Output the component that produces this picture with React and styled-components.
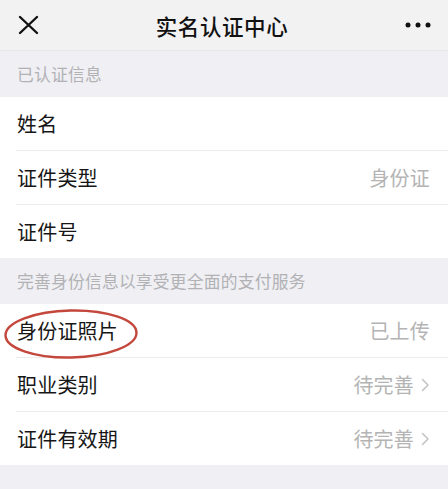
import React from "react";
import styled, { createGlobalStyle } from "styled-components";

const GlobalStyle = createGlobalStyle`
  html, body {
    margin: 0;
    padding: 0;
    background: #efeff4;
  }
  body {
    font-family: "Noto Sans CJK SC", "Noto Sans", sans-serif;
    -webkit-font-smoothing: antialiased;
  }
`;

const Page = styled.div`
  width: 448px;
  min-height: 489px;
  background: #efeff4;
`;

const NavBar = styled.header`
  height: 51px;
  box-sizing: border-box;
  background: #f2f2f3;
  border-bottom: 1px solid #e8e8ec;
  display: grid;
  grid-template-columns: 60px 1fr 60px;
  align-items: center;
`;

const NavButton = styled.div`
  display: flex;
  align-items: center;
  justify-content: ${(p) => (p.$end ? "flex-end" : "flex-start")};
  padding: ${(p) => (p.$end ? "0 17px 0 0" : "0 0 0 18px")};
  height: 100%;
`;

const Title = styled.h1`
  margin: 0;
  text-align: center;
  font-size: 21.5px;
  font-weight: 500;
  color: #111;
  letter-spacing: 0.6px;
  padding-right: 4px;
`;

const SectionTitle = styled.div`
  height: 46px;
  display: flex;
  align-items: center;
  padding-left: 17px;
  font-size: 16.8px;
  color: #b2b2b4;
  letter-spacing: 0.2px;
`;

const Group = styled.section`
  background: #fff;
`;

const Row = styled.div`
  position: relative;
  height: 53px;
  margin-left: 16px;
  padding: 0 18px 0 1px;
  display: flex;
  align-items: center;
  justify-content: space-between;
  border-bottom: 1px solid #ececec;
  &:last-child {
    border-bottom: none;
  }
`;

const Label = styled.span`
  font-size: 20px;
  color: #161616;
  letter-spacing: 0.2px;
`;

const Value = styled.span`
  display: flex;
  align-items: center;
  gap: 7px;
  font-size: 20px;
  color: #b4b4b4;
  letter-spacing: 0.2px;
`;

const Highlight = styled.svg`
  position: absolute;
  left: -13px;
  top: 4px;
  pointer-events: none;
`;

const CloseIcon = () => (
  <svg width="22" height="20" viewBox="0 0 22 20">
    <path d="M2 2 L19 18 M19 2 L2 18" stroke="#111" strokeWidth="2.4" strokeLinecap="round" fill="none" />
  </svg>
);

const MoreIcon = () => (
  <svg width="26" height="8" viewBox="0 0 26 8">
    <circle cx="3" cy="4" r="2.5" fill="#111" />
    <circle cx="13" cy="4" r="2.5" fill="#111" />
    <circle cx="23" cy="4" r="2.5" fill="#111" />
  </svg>
);

const Chevron = () => (
  <svg width="9" height="14" viewBox="0 0 9 14">
    <path d="M1.5 1.5 L7 7 L1.5 12.5" stroke="#c4c4c4" strokeWidth="1.6" fill="none" strokeLinecap="round" strokeLinejoin="round" />
  </svg>
);

const verified = [
  { label: "姓名" },
  { label: "证件类型", value: "身份证" },
  { label: "证件号" },
];

const extra = [
  { label: "身份证照片", value: "已上传", circled: true },
  { label: "职业类别", value: "待完善", arrow: true },
  { label: "证件有效期", value: "待完善", arrow: true },
];

const InfoRow = ({ label, value, arrow, circled }) => (
  <Row>
    <Label>{label}</Label>
    {value && (
      <Value>
        {value}
        {arrow && <Chevron />}
      </Value>
    )}
    {circled && (
      <Highlight width="136" height="52" viewBox="0 0 136 52">
        <ellipse cx="68" cy="26" rx="65.5" ry="23.5" fill="none" stroke="#c4473c" strokeWidth="2.4" transform="rotate(-1.2 68 26)" />
      </Highlight>
    )}
  </Row>
);

export default function App() {
  return (
    <Page>
      <GlobalStyle />
      <NavBar>
        <NavButton>
          <CloseIcon />
        </NavButton>
        <Title>实名认证中心</Title>
        <NavButton $end>
          <MoreIcon />
        </NavButton>
      </NavBar>
      <SectionTitle>已认证信息</SectionTitle>
      <Group>
        {verified.map((r) => (
          <InfoRow key={r.label} {...r} />
        ))}
      </Group>
      <SectionTitle>完善身份信息以享受更全面的支付服务</SectionTitle>
      <Group>
        {extra.map((r) => (
          <InfoRow key={r.label} {...r} />
        ))}
      </Group>
    </Page>
  );
}
